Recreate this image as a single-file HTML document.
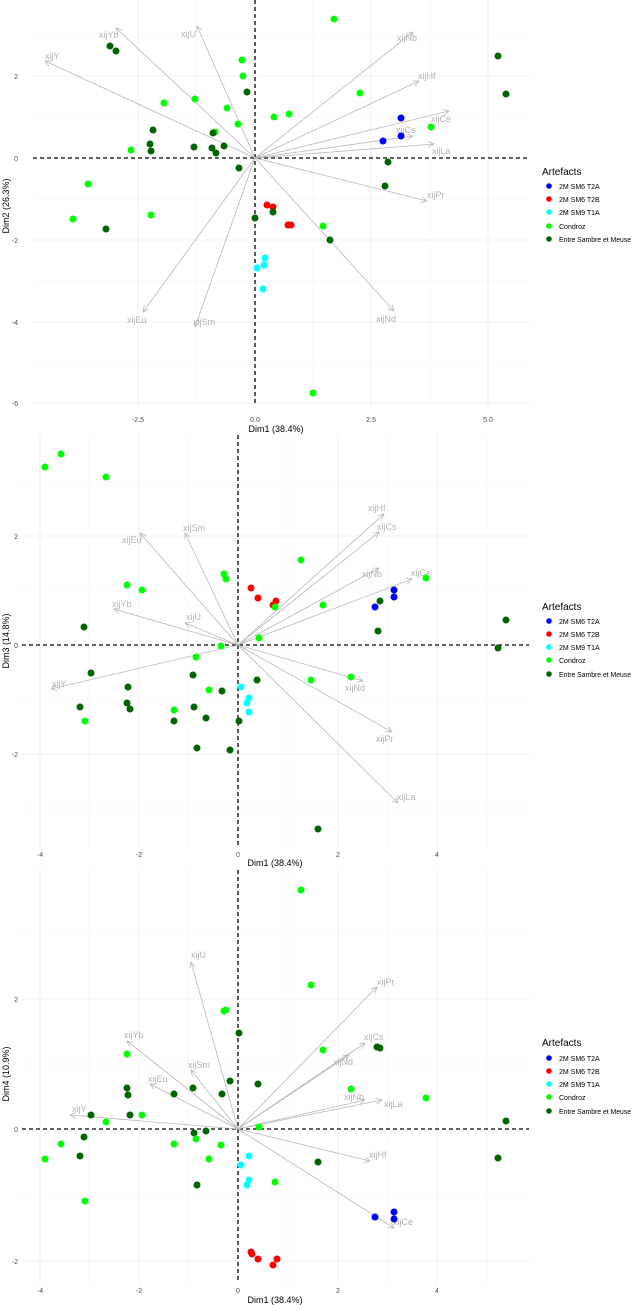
<!DOCTYPE html>
<html><head><meta charset="utf-8"><style>
html,body{margin:0;padding:0;background:#fff}
svg{display:block;font-family:"Liberation Sans",sans-serif}
.gm{stroke:#ebebeb;stroke-width:.8}
.gn{stroke:#f4f4f4;stroke-width:.6}
.d{stroke:#000;stroke-width:1.3;stroke-dasharray:4 3}
.a{stroke:#b8b8b8;stroke-width:.8;fill:none;marker-end:url(#ah)}
.l{fill:#b3b3b3;font-size:9px}
.t{fill:#4d4d4d;font-size:7px}
.ax{fill:#000;font-size:9px}
.b{fill:#0000ff}.r{fill:#ff0000}.c{fill:#00ffff}.g{fill:#00ff00}.k{fill:#006400}
.lt{font-size:10px;fill:#000}.li{font-size:7px;fill:#000}
</style></head><body>
<svg width="632" height="1305" viewBox="0 0 632 1305">
<defs><marker id="ah" markerWidth="8" markerHeight="8" refX="6" refY="3" orient="auto" markerUnits="userSpaceOnUse"><path d="M0,0 L6,3 L0,6" fill="none" stroke="#b8b8b8" stroke-width=".8"/></marker></defs>

<!-- PANEL 1 -->
<g>
<line class="gn" x1="196" y1="0" x2="196" y2="406"/><line class="gn" x1="313" y1="0" x2="313" y2="406"/><line class="gn" x1="430" y1="0" x2="430" y2="406"/>
<line class="gn" x1="33" y1="35" x2="529" y2="35"/><line class="gn" x1="33" y1="117" x2="529" y2="117"/><line class="gn" x1="33" y1="199" x2="529" y2="199"/><line class="gn" x1="33" y1="281" x2="529" y2="281"/><line class="gn" x1="33" y1="362" x2="529" y2="362"/>
<line class="gm" x1="138" y1="0" x2="138" y2="406"/><line class="gm" x1="371" y1="0" x2="371" y2="406"/><line class="gm" x1="488" y1="0" x2="488" y2="406"/>
<line class="gm" x1="33" y1="76" x2="529" y2="76"/><line class="gm" x1="33" y1="240" x2="529" y2="240"/><line class="gm" x1="33" y1="322" x2="529" y2="322"/><line class="gm" x1="33" y1="403" x2="529" y2="403"/>
<line class="d" x1="33" y1="158" x2="529" y2="158"/><line class="d" x1="255" y1="0" x2="255" y2="406"/>
<line class="a" x1="255" y1="158" x2="116" y2="28"/><line class="a" x1="255" y1="158" x2="197" y2="26"/><line class="a" x1="255" y1="158" x2="45" y2="61"/><line class="a" x1="255" y1="158" x2="143" y2="312"/><line class="a" x1="255" y1="158" x2="195" y2="327"/><line class="a" x1="255" y1="158" x2="413" y2="32"/><line class="a" x1="255" y1="158" x2="419" y2="81"/><line class="a" x1="255" y1="158" x2="449" y2="111"/><line class="a" x1="255" y1="158" x2="413" y2="136"/><line class="a" x1="255" y1="158" x2="434" y2="144"/><line class="a" x1="255" y1="158" x2="427" y2="201"/><line class="a" x1="255" y1="158" x2="394" y2="311"/>
<text class="l" x="99" y="38">xijYb</text><text class="l" x="181" y="37">xijU</text><text class="l" x="45" y="59">xijY</text><text class="l" x="127" y="323">xijEu</text><text class="l" x="193" y="325">xijSm</text><text class="l" x="397" y="41">xijNb</text><text class="l" x="418" y="79">xijHf</text><text class="l" x="431" y="122">xijCe</text><text class="l" x="396" y="133">xijCs</text><text class="l" x="432" y="154">xijLa</text><text class="l" x="427" y="198">xijPr</text><text class="l" x="376" y="322">xijNd</text>
<g>
<circle class="k" cx="110" cy="46" r="3.5"/><circle class="k" cx="116" cy="51" r="3.5"/><circle class="g" cx="242" cy="60" r="3.5"/><circle class="g" cx="243" cy="76" r="3.5"/><circle class="k" cx="247" cy="92" r="3.5"/><circle class="g" cx="164" cy="103" r="3.5"/><circle class="g" cx="195" cy="99" r="3.5"/><circle class="g" cx="227" cy="108" r="3.5"/><circle class="g" cx="238" cy="124" r="3.5"/><circle class="g" cx="274" cy="117" r="3.5"/><circle class="g" cx="289" cy="114" r="3.5"/><circle class="k" cx="153" cy="130" r="3.5"/><circle class="k" cx="150" cy="144" r="3.5"/><circle class="k" cx="151" cy="151" r="3.5"/><circle class="g" cx="131" cy="150" r="3.5"/><circle class="k" cx="194" cy="147" r="3.5"/><circle class="k" cx="212" cy="148" r="3.5"/><circle class="k" cx="216" cy="153" r="3.5"/><circle class="k" cx="224" cy="146" r="3.5"/><circle class="g" cx="215" cy="132" r="3.5"/><circle class="k" cx="213" cy="133" r="3.5"/><circle class="k" cx="239" cy="168" r="3.5"/><circle class="g" cx="88" cy="184" r="3.5"/><circle class="g" cx="73" cy="219" r="3.5"/><circle class="k" cx="106" cy="229" r="3.5"/><circle class="g" cx="151" cy="215" r="3.5"/><circle class="k" cx="255" cy="218" r="3.5"/><circle class="r" cx="267" cy="205" r="3.5"/><circle class="r" cx="273" cy="207" r="3.5"/><circle class="k" cx="273" cy="212" r="3.5"/><circle class="r" cx="288" cy="225" r="3.5"/><circle class="r" cx="291" cy="225" r="3.5"/><circle class="c" cx="265" cy="258" r="3.5"/><circle class="c" cx="264" cy="265" r="3.5"/><circle class="c" cx="257" cy="268" r="3.5"/><circle class="c" cx="263" cy="289" r="3.5"/><circle class="g" cx="313" cy="393" r="3.5"/>
<circle class="g" cx="334" cy="19" r="3.5"/><circle class="k" cx="498" cy="56" r="3.5"/><circle class="k" cx="506" cy="94" r="3.5"/><circle class="g" cx="360" cy="93" r="3.5"/><circle class="b" cx="401" cy="118" r="3.5"/><circle class="g" cx="431" cy="127" r="3.5"/><circle class="b" cx="401" cy="136" r="3.5"/><circle class="b" cx="383" cy="141" r="3.5"/><circle class="k" cx="388" cy="162" r="3.5"/><circle class="k" cx="385" cy="186" r="3.5"/><circle class="g" cx="323" cy="226" r="3.5"/><circle class="k" cx="330" cy="240" r="3.5"/>
</g>
<text class="t" x="18" y="79" text-anchor="end">2</text><text class="t" x="18" y="161" text-anchor="end">0</text><text class="t" x="18" y="243" text-anchor="end">-2</text><text class="t" x="18" y="325" text-anchor="end">-4</text><text class="t" x="18" y="406" text-anchor="end">-6</text>
<text class="t" x="138" y="422" text-anchor="middle">-2.5</text><text class="t" x="255" y="422" text-anchor="middle">0.0</text><text class="t" x="371" y="422" text-anchor="middle">2.5</text><text class="t" x="488" y="422" text-anchor="middle">5.0</text>
<text class="ax" x="276" y="432" text-anchor="middle">Dim1 (38.4%)</text>
<text class="ax" transform="translate(9,206) rotate(-90)" text-anchor="middle">Dim2 (26.3%)</text>
<text class="lt" x="542" y="175">Artefacts</text>
<circle class="b" cx="549" cy="186" r="2.8"/><circle class="r" cx="549" cy="199" r="2.8"/><circle class="c" cx="549" cy="212" r="2.8"/><circle class="g" cx="549" cy="226" r="2.8"/><circle class="k" cx="549" cy="239" r="2.8"/>
<text class="li" x="559" y="189">2M SM6 T2A</text><text class="li" x="559" y="202">2M SM6 T2B</text><text class="li" x="559" y="215">2M SM9 T1A</text><text class="li" x="559" y="229">Condroz</text><text class="li" x="559" y="242" textLength="72" lengthAdjust="spacingAndGlyphs">Entre Sambre et Meuse</text>
</g>

<!-- PANEL 2 -->
<g>
<line class="gn" x1="89" y1="435" x2="89" y2="848"/><line class="gn" x1="188" y1="435" x2="188" y2="848"/><line class="gn" x1="288" y1="435" x2="288" y2="848"/><line class="gn" x1="388" y1="435" x2="388" y2="848"/><line class="gn" x1="487" y1="435" x2="487" y2="848"/>
<line class="gn" x1="22" y1="482" x2="529" y2="482"/><line class="gn" x1="22" y1="590" x2="529" y2="590"/><line class="gn" x1="22" y1="700" x2="529" y2="700"/><line class="gn" x1="22" y1="808" x2="529" y2="808"/>
<line class="gm" x1="40" y1="435" x2="40" y2="848"/><line class="gm" x1="139" y1="435" x2="139" y2="848"/><line class="gm" x1="338" y1="435" x2="338" y2="848"/><line class="gm" x1="437" y1="435" x2="437" y2="848"/>
<line class="gm" x1="22" y1="536" x2="529" y2="536"/><line class="gm" x1="22" y1="754" x2="529" y2="754"/>
<line class="d" x1="22" y1="645" x2="529" y2="645"/><line class="d" x1="238" y1="435" x2="238" y2="848"/>
<line class="a" x1="238" y1="645" x2="140" y2="533"/><line class="a" x1="238" y1="645" x2="185" y2="533"/><line class="a" x1="238" y1="645" x2="114" y2="609"/><line class="a" x1="238" y1="645" x2="185" y2="623"/><line class="a" x1="238" y1="645" x2="51" y2="689"/><line class="a" x1="238" y1="645" x2="384" y2="514"/><line class="a" x1="238" y1="645" x2="379" y2="532"/><line class="a" x1="238" y1="645" x2="379" y2="568"/><line class="a" x1="238" y1="645" x2="412" y2="579"/><line class="a" x1="238" y1="645" x2="363" y2="681"/><line class="a" x1="238" y1="645" x2="392" y2="732"/><line class="a" x1="238" y1="645" x2="398" y2="803"/>
<text class="l" x="122" y="543">xijEu</text><text class="l" x="183" y="531">xijSm</text><text class="l" x="112" y="607">xijYb</text><text class="l" x="186" y="620">xijU</text><text class="l" x="52" y="687">xijY</text><text class="l" x="368" y="511">xijHf</text><text class="l" x="377" y="530">xijCs</text><text class="l" x="362" y="577">xijNb</text><text class="l" x="411" y="576">xijCe</text><text class="l" x="345" y="691">xijNd</text><text class="l" x="376" y="742">xijPr</text><text class="l" x="397" y="800">xijLa</text>
<g>
<circle class="g" cx="45" cy="467" r="3.5"/><circle class="g" cx="61" cy="454" r="3.5"/><circle class="g" cx="106" cy="477" r="3.5"/><circle class="g" cx="301" cy="560" r="3.5"/><circle class="g" cx="224" cy="574" r="3.5"/><circle class="g" cx="226" cy="579" r="3.5"/><circle class="r" cx="251" cy="588" r="3.5"/><circle class="r" cx="258" cy="598" r="3.5"/><circle class="r" cx="276" cy="601" r="3.5"/><circle class="r" cx="273" cy="605" r="3.5"/><circle class="g" cx="275" cy="607" r="3.5"/><circle class="g" cx="127" cy="585" r="3.5"/><circle class="g" cx="142" cy="590" r="3.5"/><circle class="k" cx="84" cy="627" r="3.5"/><circle class="g" cx="259" cy="638" r="3.5"/><circle class="g" cx="221" cy="646" r="3.5"/><circle class="g" cx="196" cy="657" r="3.5"/><circle class="k" cx="91" cy="673" r="3.5"/><circle class="k" cx="128" cy="687" r="3.5"/><circle class="k" cx="193" cy="675" r="3.5"/><circle class="k" cx="257" cy="680" r="3.5"/><circle class="g" cx="311" cy="680" r="3.5"/><circle class="c" cx="241" cy="687" r="3.5"/><circle class="g" cx="209" cy="690" r="3.5"/><circle class="k" cx="222" cy="691" r="3.5"/><circle class="c" cx="249" cy="698" r="3.5"/><circle class="c" cx="247" cy="703" r="3.5"/><circle class="c" cx="249" cy="712" r="3.5"/><circle class="k" cx="127" cy="703" r="3.5"/><circle class="k" cx="130" cy="709" r="3.5"/><circle class="k" cx="80" cy="707" r="3.5"/><circle class="g" cx="85" cy="721" r="3.5"/><circle class="g" cx="174" cy="710" r="3.5"/><circle class="k" cx="194" cy="707" r="3.5"/><circle class="k" cx="174" cy="721" r="3.5"/><circle class="k" cx="206" cy="718" r="3.5"/><circle class="k" cx="239" cy="721" r="3.5"/><circle class="k" cx="197" cy="748" r="3.5"/><circle class="k" cx="230" cy="750" r="3.5"/>
<circle class="g" cx="323" cy="605" r="3.5"/><circle class="b" cx="394" cy="590" r="3.5"/><circle class="b" cx="394" cy="597" r="3.5"/><circle class="k" cx="380" cy="601" r="3.5"/><circle class="b" cx="375" cy="607" r="3.5"/><circle class="k" cx="378" cy="631" r="3.5"/><circle class="k" cx="506" cy="620" r="3.5"/><circle class="k" cx="498" cy="648" r="3.5"/><circle class="g" cx="351" cy="677" r="3.5"/><circle class="k" cx="318" cy="829" r="3.5"/><circle class="g" cx="426" cy="578" r="3.5"/>
</g>
<text class="t" x="18" y="539" text-anchor="end">2</text><text class="t" x="18" y="648" text-anchor="end">0</text><text class="t" x="18" y="757" text-anchor="end">-2</text>
<text class="t" x="40" y="857" text-anchor="middle">-4</text><text class="t" x="139" y="857" text-anchor="middle">-2</text><text class="t" x="238" y="857" text-anchor="middle">0</text><text class="t" x="338" y="857" text-anchor="middle">2</text><text class="t" x="437" y="857" text-anchor="middle">4</text>
<text class="ax" x="275" y="866" text-anchor="middle">Dim1 (38.4%)</text>
<text class="ax" transform="translate(9,641) rotate(-90)" text-anchor="middle">Dim3 (14.8%)</text>
<text class="lt" x="542" y="610">Artefacts</text>
<circle class="b" cx="549" cy="621" r="2.8"/><circle class="r" cx="549" cy="634" r="2.8"/><circle class="c" cx="549" cy="647" r="2.8"/><circle class="g" cx="549" cy="660" r="2.8"/><circle class="k" cx="549" cy="674" r="2.8"/>
<text class="li" x="559" y="624">2M SM6 T2A</text><text class="li" x="559" y="637">2M SM6 T2B</text><text class="li" x="559" y="650">2M SM9 T1A</text><text class="li" x="559" y="663">Condroz</text><text class="li" x="559" y="677" textLength="72" lengthAdjust="spacingAndGlyphs">Entre Sambre et Meuse</text>
</g>

<!-- PANEL 3 -->
<g>
<line class="gn" x1="89" y1="870" x2="89" y2="1283"/><line class="gn" x1="188" y1="870" x2="188" y2="1283"/><line class="gn" x1="288" y1="870" x2="288" y2="1283"/><line class="gn" x1="388" y1="870" x2="388" y2="1283"/><line class="gn" x1="487" y1="870" x2="487" y2="1283"/>
<line class="gn" x1="22" y1="933" x2="529" y2="933"/><line class="gn" x1="22" y1="1064" x2="529" y2="1064"/><line class="gn" x1="22" y1="1194" x2="529" y2="1194"/>
<line class="gm" x1="40" y1="870" x2="40" y2="1283"/><line class="gm" x1="139" y1="870" x2="139" y2="1283"/><line class="gm" x1="338" y1="870" x2="338" y2="1283"/><line class="gm" x1="437" y1="870" x2="437" y2="1283"/>
<line class="gm" x1="22" y1="999" x2="529" y2="999"/><line class="gm" x1="22" y1="1261" x2="529" y2="1261"/>
<line class="d" x1="22" y1="1129" x2="529" y2="1129"/><line class="d" x1="238" y1="870" x2="238" y2="1283"/>
<line class="a" x1="238" y1="1129" x2="191" y2="962"/><line class="a" x1="238" y1="1129" x2="127" y2="1041"/><line class="a" x1="238" y1="1129" x2="191" y2="1070"/><line class="a" x1="238" y1="1129" x2="150" y2="1084"/><line class="a" x1="238" y1="1129" x2="70" y2="1115"/><line class="a" x1="238" y1="1129" x2="377" y2="987"/><line class="a" x1="238" y1="1129" x2="365" y2="1043"/><line class="a" x1="238" y1="1129" x2="349" y2="1055"/><line class="a" x1="238" y1="1129" x2="365" y2="1100"/><line class="a" x1="238" y1="1129" x2="382" y2="1100"/><line class="a" x1="238" y1="1129" x2="370" y2="1161"/><line class="a" x1="238" y1="1129" x2="394" y2="1228"/>
<text class="l" x="191" y="958">xijU</text><text class="l" x="124" y="1038">xijYb</text><text class="l" x="188" y="1068">xijSm</text><text class="l" x="148" y="1082">xijEu</text><text class="l" x="72" y="1112">xijY</text><text class="l" x="377" y="985">xijPr</text><text class="l" x="364" y="1040">xijCs</text><text class="l" x="333" y="1065">xijNd</text><text class="l" x="344" y="1100">xijNb</text><text class="l" x="384" y="1107">xijLa</text><text class="l" x="369" y="1158">xijHf</text><text class="l" x="393" y="1225">xijCe</text>
<g>
<circle class="g" cx="301" cy="890" r="3.5"/><circle class="g" cx="311" cy="985" r="3.5"/><circle class="g" cx="224" cy="1011" r="3.5"/><circle class="g" cx="226" cy="1010" r="3.5"/><circle class="k" cx="239" cy="1033" r="3.5"/><circle class="g" cx="127" cy="1054" r="3.5"/><circle class="k" cx="230" cy="1081" r="3.5"/><circle class="k" cx="258" cy="1084" r="3.5"/><circle class="k" cx="127" cy="1088" r="3.5"/><circle class="k" cx="128" cy="1095" r="3.5"/><circle class="k" cx="174" cy="1094" r="3.5"/><circle class="k" cx="193" cy="1088" r="3.5"/><circle class="k" cx="222" cy="1094" r="3.5"/><circle class="k" cx="91" cy="1115" r="3.5"/><circle class="k" cx="130" cy="1115" r="3.5"/><circle class="g" cx="142" cy="1115" r="3.5"/><circle class="g" cx="106" cy="1122" r="3.5"/><circle class="g" cx="259" cy="1127" r="3.5"/><circle class="k" cx="206" cy="1131" r="3.5"/><circle class="k" cx="194" cy="1133" r="3.5"/><circle class="k" cx="84" cy="1137" r="3.5"/><circle class="g" cx="196" cy="1139" r="3.5"/><circle class="g" cx="61" cy="1144" r="3.5"/><circle class="g" cx="174" cy="1144" r="3.5"/><circle class="g" cx="221" cy="1145" r="3.5"/><circle class="k" cx="80" cy="1156" r="3.5"/><circle class="g" cx="45" cy="1159" r="3.5"/><circle class="g" cx="209" cy="1159" r="3.5"/><circle class="c" cx="249" cy="1156" r="3.5"/><circle class="c" cx="241" cy="1165" r="3.5"/><circle class="c" cx="249" cy="1180" r="3.5"/><circle class="c" cx="247" cy="1185" r="3.5"/><circle class="k" cx="197" cy="1185" r="3.5"/><circle class="g" cx="275" cy="1182" r="3.5"/><circle class="g" cx="85" cy="1201" r="3.5"/>
<circle class="r" cx="251" cy="1252" r="3.5"/><circle class="r" cx="252" cy="1254" r="3.5"/><circle class="r" cx="258" cy="1259" r="3.5"/><circle class="r" cx="277" cy="1259" r="3.5"/><circle class="r" cx="273" cy="1265" r="3.5"/>
<circle class="g" cx="323" cy="1050" r="3.5"/><circle class="k" cx="377" cy="1047" r="3.5"/><circle class="k" cx="380" cy="1048" r="3.5"/><circle class="g" cx="351" cy="1089" r="3.5"/><circle class="g" cx="426" cy="1098" r="3.5"/><circle class="k" cx="506" cy="1121" r="3.5"/><circle class="k" cx="498" cy="1158" r="3.5"/><circle class="k" cx="318" cy="1162" r="3.5"/><circle class="b" cx="394" cy="1212" r="3.5"/><circle class="b" cx="394" cy="1219" r="3.5"/><circle class="b" cx="375" cy="1217" r="3.5"/>
</g>
<text class="t" x="18" y="1002" text-anchor="end">2</text><text class="t" x="18" y="1132" text-anchor="end">0</text><text class="t" x="18" y="1264" text-anchor="end">-2</text>
<text class="t" x="40" y="1293" text-anchor="middle">-4</text><text class="t" x="139" y="1293" text-anchor="middle">-2</text><text class="t" x="238" y="1293" text-anchor="middle">0</text><text class="t" x="338" y="1293" text-anchor="middle">2</text><text class="t" x="437" y="1293" text-anchor="middle">4</text>
<text class="ax" x="275" y="1303" text-anchor="middle">Dim1 (38.4%)</text>
<text class="ax" transform="translate(9,1074) rotate(-90)" text-anchor="middle">Dim4 (10.9%)</text>
<text class="lt" x="542" y="1046">Artefacts</text>
<circle class="b" cx="549" cy="1058" r="2.8"/><circle class="r" cx="549" cy="1071" r="2.8"/><circle class="c" cx="549" cy="1084" r="2.8"/><circle class="g" cx="549" cy="1097" r="2.8"/><circle class="k" cx="549" cy="1111" r="2.8"/>
<text class="li" x="559" y="1061">2M SM6 T2A</text><text class="li" x="559" y="1074">2M SM6 T2B</text><text class="li" x="559" y="1087">2M SM9 T1A</text><text class="li" x="559" y="1100">Condroz</text><text class="li" x="559" y="1114" textLength="72" lengthAdjust="spacingAndGlyphs">Entre Sambre et Meuse</text>
</g>
</svg>
</body></html>
